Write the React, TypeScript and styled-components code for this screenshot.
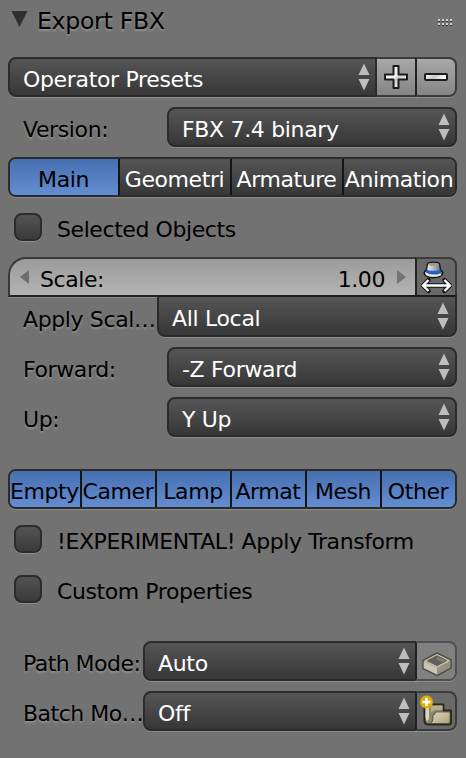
import React from 'react';
import styled, { createGlobalStyle, css } from 'styled-components';

const GlobalStyle = createGlobalStyle`
  *, *::before, *::after { box-sizing: border-box; }
  body { margin: 0; background: #727272; }
`;

const Panel = styled.main`
  width: 466px;
  height: 758px;
  padding: 0 9px 0 8px;
  overflow: hidden;
  background: #727272;
  color: #000;
  font-family: 'DejaVu Sans', sans-serif;
  font-size: 22px;
  letter-spacing: -0.42px;
  line-height: 40px;
  white-space: nowrap;
`;

const engraved = css`
  text-shadow: 0 2px 2px rgba(255, 255, 255, 0.24);
`;

const Header = styled.header`
  display: flex;
  align-items: center;
  height: 42px;
  padding: 0 4px 0 3px;
  margin-bottom: 15px;
`;

const Disclosure = styled.svg`
  margin-top: -2px;
`;

const Title = styled.h1`
  flex: 1;
  margin: 0 0 0 9px;
  font-size: 23.6px;
  font-weight: 400;
  letter-spacing: -0.3px;
  line-height: 42px;
  ${engraved}
`;

const GripSvg = styled.svg`
  margin-top: 4px;
`;

const Row = styled.div<{ $gap?: number }>`
  display: flex;
  height: 40px;
  margin-bottom: ${p => p.$gap ?? 10}px;
`;

const Label = styled.label<{ $width: number; $spacing?: number }>`
  flex: 0 0 ${p => p.$width}px;
  min-width: 0;
  padding: 3px 0 0 15px;
  letter-spacing: ${p => p.$spacing ?? -0.38}px;
  ${engraved}
`;

const box = css`
  border: 2px solid #2b2b2b;
  box-shadow: 0 1px 0 rgba(255, 255, 255, 0.19);
`;

const Select = styled.button<{ $joined?: boolean; $flatTop?: boolean }>`
  ${box}
  display: flex;
  flex: 1;
  align-items: center;
  justify-content: space-between;
  min-width: 0;
  height: ${p => (p.$flatTop ? 42 : 40)}px;
  margin-top: ${p => (p.$flatTop ? -2 : 0)}px;
  padding: ${p => (p.$flatTop ? '5px 6px 0 13px' : '5px 5px 0 13px')};
  border-top-color: ${p => (p.$flatTop ? '#1b1b1b' : '#2b2b2b')};
  border-radius: ${p => (p.$flatTop ? '0 0 8px 8px' : p.$joined ? '8px 0 0 8px' : '8px')};
  background: linear-gradient(#555, #373737);
  color: #fff;
  font: inherit;
  letter-spacing: -0.33px;
  line-height: 35px;
  text-align: left;
`;

const ArrowsSvg = styled.svg`
  flex: none;
  margin-top: -6px;
`;

const IconButton = styled.button<{ $tone?: 'light' | 'dim' | 'plain'; $last?: boolean; $square?: boolean }>`
  ${box}
  display: flex;
  flex: 0 0 ${p => (p.$last ? 42 : 40)}px;
  align-items: center;
  justify-content: center;
  margin-left: ${p => (p.$last ? -2 : 0)}px;
  padding: 0;
  border-color: ${p => (p.$tone === 'dim' ? '#505050' : '#3b3b3b')};
  border-left-color: #222;
  border-left-width: ${p => (p.$last ? 2 : 0)}px;
  border-radius: ${p => (p.$square ? '0 8px 0 0' : p.$last ? '0 8px 8px 0' : '0')};
  background: ${p =>
    p.$tone === 'light' ? 'linear-gradient(#a8a8a8, #858585)' : p.$tone === 'dim' ? '#808080' : '#696969'};
`;

const Segments = styled.div<{ $columns: string; $gap: number }>`
  ${box}
  display: grid;
  grid-template-columns: ${p => p.$columns};
  height: 40px;
  margin-bottom: ${p => p.$gap}px;
  overflow: hidden;
  border-radius: 8px;
`;

const Segment = styled.button<{ $on?: boolean }>`
  display: flex;
  justify-content: center;
  min-width: 0;
  height: 36px;
  padding: 3px 1px 0 0;
  overflow: hidden;
  border: 0;
  border-right: 2px solid #151515;
  background: ${p => (p.$on ? 'linear-gradient(#466fb2, #658dd1)' : 'linear-gradient(#555, #373737)')};
  color: ${p => (p.$on ? '#000' : '#fff')};
  font: inherit;
  letter-spacing: inherit;
  line-height: 36px;
  &:last-child { border-right: 0; }
`;

const CheckRow = styled.label<{ $gap?: number }>`
  display: flex;
  align-items: center;
  height: 40px;
  margin-bottom: ${p => p.$gap ?? 10}px;
  padding-left: 6px;
`;

const CheckBox = styled.span`
  ${box}
  width: 28px;
  height: 28px;
  margin-right: 15px;
  border-radius: 8px;
  background: linear-gradient(#535353, #3a3a3a);
`;

const CheckText = styled.span`
  padding-top: 6px;
`;

const NumberField = styled.div`
  display: flex;
  flex: 1;
  align-items: center;
  padding: 6px 11px 0 10px;
  border: 2px solid #3a3a3a;
  border-right: 0;
  border-bottom-color: #222;
  border-radius: 18px 0 0 0;
  background: linear-gradient(#9b9b9b, #b4b4b4);
  box-shadow: 0 1px 0 rgba(255, 255, 255, 0.19);
  line-height: 30px;
`;

const NumberName = styled.span`
  flex: 1;
  padding-left: 11px;
`;

const NumberValue = styled.span`
  margin-right: 12px;
`;

const StepArrow = styled.svg`
  margin-top: -7px;
`;

const Arrows = () => (
  <ArrowsSvg width="12" height="28" viewBox="0 0 12 28" fill="#bdbdbd">
    <path d="M6 .5 11.5 12H.5Z" />
    <path d="M.5 16h11L6 27.5Z" />
  </ArrowsSvg>
);

const Grip = () => (
  <GripSvg width="16" height="8" viewBox="0 0 16 8">
    {[0, 4, 8, 12].map(x =>
      [0, 4].map(y => (
        <g key={`${x}-${y}`}>
          <rect x={x + 1} y={y} width="2" height="2" fill="#d0d0d0" />
          <rect x={x + 1} y={y + 2} width="2" height="1" fill="#333" />
        </g>
      )),
    )}
  </GripSvg>
);

const PlusIcon = () => (
  <svg width="26" height="26" viewBox="0 0 26 26">
    <defs>
      <linearGradient id="metal" x1="0" y1="0" x2="1" y2="1">
        <stop offset="0" stopColor="#fff" />
        <stop offset=".48" stopColor="#eee" />
        <stop offset=".55" stopColor="#ccc" />
        <stop offset="1" stopColor="#fff" />
      </linearGradient>
    </defs>
    <path d="M10.500 2h5v8.500h8.500v5h-8.500v8.500h-5v-8.500H2v-5h8.500Z" fill="url(#metal)" stroke="#1c1c1c" strokeWidth="2" strokeLinejoin="round" />
  </svg>
);

const MinusIcon = () => (
  <svg width="26" height="26" viewBox="0 0 26 26">
    <defs>
      <linearGradient id="bar" x1="0" y1="0" x2="1" y2=".3">
        <stop offset="0" stopColor="#fff" />
        <stop offset=".5" stopColor="#c9c9c9" />
        <stop offset="1" stopColor="#fff" />
      </linearGradient>
    </defs>
    <rect x="2" y="10" width="22" height="6" rx="1" fill="url(#bar)" stroke="#1c1c1c" strokeWidth="2" />
  </svg>
);

const HatIcon = () => (
  <svg width="32" height="34" viewBox="0 0 32 34">
    <defs>
      <linearGradient id="felt" x1="0" x2="1">
        <stop offset="0" stopColor="#f2f2f2" />
        <stop offset=".4" stopColor="#c4c4c4" />
        <stop offset="1" stopColor="#727272" />
      </linearGradient>
    </defs>
    <ellipse cx="13.500" cy="13" rx="9.300" ry="4.600" fill="url(#felt)" stroke="#161616" strokeWidth="1.600" />
    <path d="M7.300 4.500C7.300 1.500 19.700 1.500 19.700 4.500l1 6.500c-1 3-13.400 3-14.400 0Z" fill="url(#felt)" stroke="#161616" strokeWidth="1.400" />
    <path d="M6.600 9.200c2 2 11.800 2 13.800 0l.5 2.500c-2 2.800-12.800 2.800-14.800 0Z" fill="#1768df" />
    <ellipse cx="13.500" cy="4.300" rx="5.200" ry="1.500" fill="#999" />
    <path d="M6 14.500c3 2 11 2 15 0" fill="none" stroke="#eee" strokeWidth="1.500" />
    <path d="m8.500 20-5.500 5.500 5.500 5.500M24.500 20l5.500 5.500-5.500 5.500M4 25.500h25" fill="none" stroke="#111" strokeWidth="4.300" strokeLinejoin="round" strokeLinecap="round" />
    <path d="m8.500 20-5.500 5.500 5.500 5.500M24.500 20l5.500 5.500-5.500 5.500M4 25.500h25" fill="none" stroke="#fff" strokeWidth="2.400" />
  </svg>
);

const CrateSvg = styled.svg`
  margin: 6px 0 0 2px;
`;

const CrateIcon = () => (
  <CrateSvg width="32" height="26" viewBox="0 0 32 26">
    <path d="M2 9.500 16 2l14 7v8l-14 7.500L2 17.500Z" fill="#aaa593" stroke="#514f49" strokeWidth="1.600" strokeLinejoin="round" />
    <path d="M2.800 9.900 16 2.900l13.200 6.600L16 16.500Z" fill="#c3bdaa" />
    <path d="m6.500 9.800 9.500-5 9.500 4.700-2.500 1.500-7 3.500Z" fill="#5f5f5f" stroke="#5b574d" />
    <path d="m16 5.300 8.700 4.300-3 1.700-5.700-2.800Z" fill="#827c6b" />
    <path d="M2.800 10.700 16 17.200v6.200L2.800 16.900Z" fill="#c9c4b4" />
    <path d="M16 17.200 29.200 10.300v6.200L16 23.400Z" fill="#96907d" />
  </CrateSvg>
);

const NewFolderIcon = () => (
  <svg width="34" height="34" viewBox="0 0 34 34">
    <defs>
      <linearGradient id="manila" x1="0" y1="0" x2="1" y2="1">
        <stop offset="0" stopColor="#e2dcc5" />
        <stop offset="1" stopColor="#aaa079" />
      </linearGradient>
      <radialGradient id="glow">
        <stop offset=".45" stopColor="#dca900" />
        <stop offset=".8" stopColor="#e2b400" />
        <stop offset="1" stopColor="#e2b400" stopOpacity=".15" />
      </radialGradient>
    </defs>
    <path d="M6.500 11.500h5l1-1h12v6h7.500v12q0 2-2 2H9.500q-4 0-4-4v-14Z" fill="#8e8768" stroke="#29261c" strokeWidth="2" strokeLinejoin="round" />
    <path d="M6.500 13h3.500v9q0 4-1.500 5-2-1-2-4Z" fill="#ddd7c0" />
    <path d="M12 11.500h11.500v4.500h-8l-3.500 2.500Z" fill="#b5ad8d" />
    <path d="M16.500 18h14.500v9.500q0 2-2.500 2H10.500q3.500-1 3.500-4.500v-4q2.500 0 2.500-3Z" fill="url(#manila)" stroke="#4e4936" strokeWidth=".8" />
    <circle cx="7.500" cy="8" r="7" fill="url(#glow)" />
    <path d="M7.500 4v8M3.500 8h8" stroke="#fff" strokeWidth="2.600" />
  </svg>
);

export default function App() {
  return (
    <>
      <GlobalStyle />
      <Panel>
        <Header>
          <Disclosure width="17" height="18" viewBox="0 0 17 18">
            <path d="M.5 0h16L8.500 16Z" fill="#303030" />
          </Disclosure>
          <Title>Export FBX</Title>
          <Grip />
        </Header>

        <Row>
          <Select $joined><span>Operator Presets</span><Arrows /></Select>
          <IconButton $tone="light"><PlusIcon /></IconButton>
          <IconButton $tone="light" $last><MinusIcon /></IconButton>
        </Row>
        <Row>
          <Label $width={159}>Version:</Label>
          <Select><span>FBX 7.4 binary</span><Arrows /></Select>
        </Row>

        <Segments $columns="110px 112px 112px 1fr" $gap={10}>
          <Segment $on>Main</Segment>
          <Segment>Geometri</Segment>
          <Segment>Armature</Segment>
          <Segment>Animation</Segment>
        </Segments>

        <CheckRow><CheckBox /><CheckText>Selected Objects</CheckText></CheckRow>

        <Row $gap={0}>
          <NumberField>
            <StepArrow width="9" height="14" viewBox="0 0 9 14"><path d="M9 0v14L0 7Z" fill="#6f6f6f" /></StepArrow>
            <NumberName>Scale:</NumberName>
            <NumberValue>1.00</NumberValue>
            <StepArrow width="9" height="14" viewBox="0 0 9 14"><path d="M0 0v14l9-7Z" fill="#747474" /></StepArrow>
          </NumberField>
          <IconButton $last $square><HatIcon /></IconButton>
        </Row>
        <Row>
          <Label $width={149}>Apply Scal…</Label>
          <Select $flatTop><span>All Local</span><Arrows /></Select>
        </Row>
        <Row>
          <Label $width={159}>Forward:</Label>
          <Select><span>-Z Forward</span><Arrows /></Select>
        </Row>
        <Row $gap={32}>
          <Label $width={159}>Up:</Label>
          <Select><span>Y Up</span><Arrows /></Select>
        </Row>

        <Segments $columns="72px 75px 75px 75px 75px 1fr" $gap={10}>
          <Segment $on>Empty</Segment>
          <Segment $on>Camer</Segment>
          <Segment $on>Lamp</Segment>
          <Segment $on>Armat</Segment>
          <Segment $on>Mesh</Segment>
          <Segment $on>Other</Segment>
        </Segments>

        <CheckRow><CheckBox /><CheckText>!EXPERIMENTAL! Apply Transform</CheckText></CheckRow>
        <CheckRow $gap={32}><CheckBox /><CheckText>Custom Properties</CheckText></CheckRow>

        <Row>
          <Label $width={135} $spacing={-0.54}>Path Mode:</Label>
          <Select $joined><span>Auto</span><Arrows /></Select>
          <IconButton $tone="dim" $last><CrateIcon /></IconButton>
        </Row>
        <Row>
          <Label $width={135} $spacing={-0.5}>Batch Mo…</Label>
          <Select $joined><span>Off</span><Arrows /></Select>
          <IconButton $last><NewFolderIcon /></IconButton>
        </Row>
      </Panel>
    </>
  );
}
